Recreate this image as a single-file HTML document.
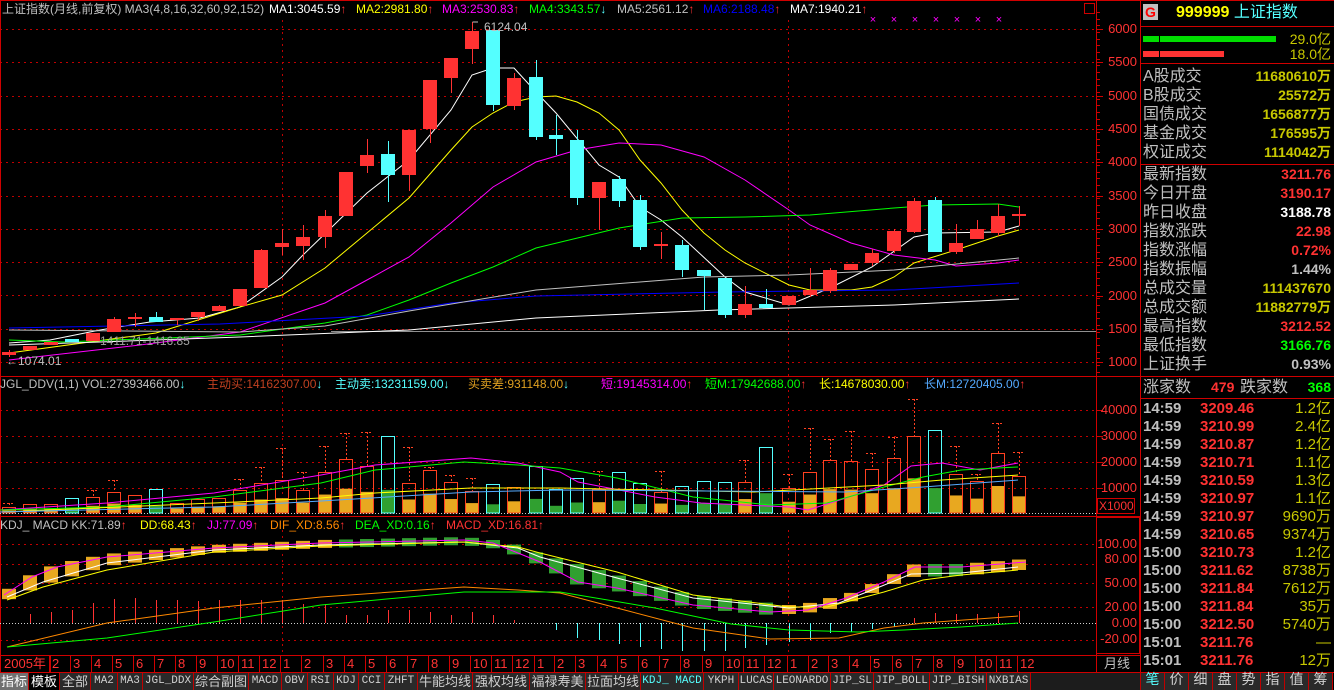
<!DOCTYPE html>
<html><head><meta charset="utf-8">
<style>
*{margin:0;padding:0;box-sizing:border-box}
body{width:1334px;height:690px;background:#000;overflow:hidden;position:relative;font-family:"Liberation Sans","Noto Sans CJK SC",sans-serif}
.t{position:absolute;white-space:nowrap;font-size:12px;line-height:14px}
.rp{position:absolute;white-space:nowrap;font-size:16px;line-height:19px;color:#c0c0c0}
.rv{position:absolute;white-space:nowrap;font-size:14px;line-height:19px;font-weight:bold;right:3px;text-align:right}
.tk{position:absolute;left:1143px;width:188px;height:18px;font-size:15px;line-height:18px;font-weight:bold}
.tab{position:absolute;top:673px;height:17px;border-right:1px solid #c00000;background:#2a2a2a;color:#d0d0d0;font-size:12px;line-height:17px;text-align:center;font-family:"Liberation Mono","Noto Sans CJK SC",monospace}
</style></head><body>
<svg id="s" width="1334" height="690" style="position:absolute;left:0;top:0"></svg>

<div class="t" style="left:2px;top:2px;color:#c0c0c0">上证指数(月线,前复权) MA3(4,8,16,32,60,92,152)</div>
<div class="t" style="left:269px;top:2px;color:#fff">MA1:3045.59<span style="color:#f33">↑</span></div>
<div class="t" style="left:356px;top:2px;color:#ff0">MA2:2981.80<span style="color:#f33">↑</span></div>
<div class="t" style="left:442px;top:2px;color:#f0f">MA3:2530.83<span style="color:#f33">↑</span></div>
<div class="t" style="left:529px;top:2px;color:#0f0">MA4:3343.57<span style="color:#5ff">↓</span></div>
<div class="t" style="left:617px;top:2px;color:#c0c0c0">MA5:2561.12<span style="color:#f33">↑</span></div>
<div class="t" style="left:703px;top:2px;color:#00f">MA6:2188.48<span style="color:#f33">↑</span></div>
<div class="t" style="left:790px;top:2px;color:#fff">MA7:1940.21<span style="color:#f33">↑</span></div>
<div class="t" style="left:484px;top:20px;color:#c0c0c0">6124.04</div>
<div class="t" style="left:6px;top:354px;color:#c0c0c0">←1074.01</div>
<div class="t" style="left:100px;top:334px;color:#a0a0a0">1411.71-1416.85</div>

<div class="t" style="left:0;top:377px;color:#c0c0c0">JGL_DDV(1,1) VOL:27393466.00<span style="color:#5ff">↓</span></div>
<div class="t" style="left:207px;top:377px;color:#c04020">主动买:14162307.00<span style="color:#5ff">↓</span></div>
<div class="t" style="left:335px;top:377px;color:#5ff">主动卖:13231159.00<span style="color:#5ff">↓</span></div>
<div class="t" style="left:468px;top:377px;color:#e0a020">买卖差:931148.00<span style="color:#5ff">↓</span></div>
<div class="t" style="left:601px;top:377px;color:#f0f">短:19145314.00<span style="color:#f33">↑</span></div>
<div class="t" style="left:705px;top:377px;color:#0f0">短M:17942688.00<span style="color:#f33">↑</span></div>
<div class="t" style="left:819px;top:377px;color:#ff0">长:14678030.00<span style="color:#f33">↑</span></div>
<div class="t" style="left:924px;top:377px;color:#5af">长M:12720405.00<span style="color:#f33">↑</span></div>

<div class="t" style="left:0;top:518px;color:#c0c0c0">KDJ_ MACD KK:71.89<span style="color:#f33">↑</span></div>
<div class="t" style="left:140px;top:518px;color:#ff0">DD:68.43<span style="color:#f33">↑</span></div>
<div class="t" style="left:207px;top:518px;color:#f0f">JJ:77.09<span style="color:#f33">↑</span></div>
<div class="t" style="left:270px;top:518px;color:#f80">DIF_XD:8.56<span style="color:#f33">↑</span></div>
<div class="t" style="left:355px;top:518px;color:#0f0">DEA_XD:0.16<span style="color:#f33">↑</span></div>
<div class="t" style="left:446px;top:518px;color:#f33">MACD_XD:16.81<span style="color:#f33">↑</span></div>

<div id="ax"></div>

<!-- right panel -->
<div style="position:absolute;left:1143px;top:4px;width:15px;height:16px;background:#c0c0c0;color:#f00;font-size:14px;line-height:16px;text-align:center;font-weight:bold">G</div>
<div class="t" style="left:1176px;top:3px;font-size:16px;line-height:19px;color:#ff0;font-weight:bold">999999 <span style="color:#5ff;font-weight:normal">上证指数</span></div>
<div style="position:absolute;left:1143px;top:36px;width:133px;height:6px;background:#0d0"></div>
<div style="position:absolute;left:1159px;top:36px;width:1px;height:6px;background:#000"></div>
<div style="position:absolute;left:1143px;top:51px;width:81px;height:6px;background:#f33"></div>
<div style="position:absolute;left:1159px;top:51px;width:1px;height:6px;background:#000"></div>
<div class="rv" style="top:30px;color:#c8c800;font-weight:normal">29.0亿</div>
<div class="rv" style="top:45px;color:#c8c800;font-weight:normal">18.0亿</div>

<div id="rows"></div>

<div class="tab" style="left:0;width:29px;background:#707070;color:#fff;font-family:'Liberation Sans','Noto Sans CJK SC',sans-serif;font-size:13px">指标</div>
<div class="tab" style="left:29px;width:31px;background:#000;color:#fff;font-family:'Liberation Sans','Noto Sans CJK SC',sans-serif;font-size:13px">模板</div>
<div id="tabs"></div>

<script>
const S=document.getElementById('s');let h='';
function L(x1,y1,x2,y2,c,d){h+=`<line x1="${x1}" y1="${y1}" x2="${x2}" y2="${y2}" stroke="${c}" stroke-width="1"${d?` stroke-dasharray="${d}"`:''}/>`}
function R(x,y,w,hh,f,st){h+=`<rect x="${x}" y="${y}" width="${w}" height="${hh}" fill="${f||'none'}"${st?` stroke="${st}" stroke-width="1"`:''}/>`}
function P(pts,c,w){h+=`<polyline points="${pts.map(p=>p.join(',')).join(' ')}" fill="none" stroke="${c}" stroke-width="${w||1}"/>`}
// grid
for(let i=0;i<=10;i++){let y=Math.round(29+i*33.3)+.5;L(0,y,1096,y,'#c00000','2,4')}
for(const x of [282.5,788.5]){L(x,20,x,376,'#c00000','2,4');L(x,390,x,515,'#c00000','2,4');L(x,530,x,655,'#c00000','2,4')}
[410,436,462,488].forEach(y=>L(0,y+.5,1096,y+.5,'#c00000','2,4'));
[544,564,583,607,640].forEach(y=>L(0,y+.5,1096,y+.5,'#c00000','2,4'));
// frame
L(0,0.5,1334,0.5,'#d00000');
[376.5,516.5,655.5,672.5].forEach(y=>L(0,y,1140,y,'#d00000'));
L(1096.5,0,1096.5,690,'#d00000');L(1140.5,0,1140.5,690,'#d00000');L(0.5,0,0.5,672,'#d00000');
R(1084.5,3.5,10,10,null,'#d00000');
// magenta marks
for(let i=0;i<7;i++){let x=873+i*21;h+=`<text x="${x}" y="23" fill="#f0f" font-size="11" font-family="Liberation Sans" text-anchor="middle">×</text>`}
L(331,331.5,1096,331.5,'#909090');
// MAs
P([[9,343],[50,340],[100,330],[150,322],[200,318],[240,307],[282,277],[303,255],[367,193],[409,160],[451,110],[472,75],[493,68],[514,68],[536,92],[556,113],[599,165],[619,177],[640,207],[661,220],[682,237],[725,277],[745,292],[789,305],[830,288],[872,267],[914,237],[935,233],[998,232],[1019,226]],'#fff');
P([[9,353],[156,333],[240,307],[282,295],[325,268],[367,233],[409,198],[451,150],[472,127],[493,113],[514,102],[536,97],[556,96],[577,102],[599,113],[619,130],[640,160],[661,183],[682,210],[704,233],[725,250],[745,263],[789,285],[810,290],[851,290],[872,287],[894,277],[914,263],[956,250],[998,236],[1019,230]],'#ff0');
P([[9,360],[140,345],[240,332],[325,303],[367,280],[409,257],[451,223],[493,187],[536,162],[577,150],[619,143],[661,145],[704,157],[745,180],[789,210],[810,225],[851,243],[894,255],[935,260],[956,266],[998,263],[1019,260]],'#f0f');
P([[9,340],[63,342],[240,335],[325,323],[367,315],[409,300],[451,283],[493,267],[536,248],[619,228],[682,218],[745,217],[810,215],[894,208],[935,205],[998,204],[1019,207]],'#0f0');
P([[9,328],[220,324],[367,316],[451,303],[536,296],[725,292],[894,290],[1019,283]],'#00f');
P([[9,330],[240,332],[325,326],[409,311],[536,290],[704,277],[789,275],[894,270],[1019,258]],'#c0c0c0');
P([[9,345],[100,342],[240,337],[409,330],[536,318],[719,310],[894,305],[1019,299]],'#fff');
// candles
const C=[[9,352,355,'r',350,357],[30,346,350,'r'],[51,342,345,'r'],[72,339,342,'c'],[93,333,341,'r'],[114,319,332,'r',317],[135,317,318,'r',313,327],[156,317,322,'c',312],[177,318,320,'r',0,325],[198,312,317,'r',0,321],[219,306,311,'r',305],[240,289,306,'r'],[261,250,288,'r',249],[282,243,247,'r',229,255],[303,237,246,'r',225,260],[325,216,237,'r',210,248],[346,172,216,'r'],[367,155,166,'r',139,173],[388,154,175,'c',141,202],[409,130,175,'r',0,191],[430,80,129,'r',0,143],[451,58,78,'r',0,93],[472,31,49,'r',22,64],[493,30,105,'c',0,111],[514,78,106,'r',73,110],[536,77,137,'c',60,140],[556,135,139,'c',115,155],[577,140,198,'c',130,205],[599,182,198,'r',0,230],[619,179,201,'c',176,207],[640,200,247,'c',195,250],[661,244,246,'r',232,259],[682,245,270,'c',240,277],[704,270,276,'c',0,310],[725,278,315,'c',0,318],[745,304,315,'r',286,318],[766,304,308,'c',289],[789,296,305,'r'],[810,290,295,'r',268,297],[830,270,291,'r',268,293],[851,264,270,'r'],[872,253,263,'r',249,266],[894,231,251,'r',229,253],[914,201,232,'r',198,233],[935,200,252,'c',197],[956,243,252,'r',224,254],[977,229,239,'r',220],[998,216,233,'r',204,236],[1019,214,215,'r',206,226]];
C.forEach(c=>{let [x,t,b,k,hi,lo]=c;let col=k=='r'?'#ff3232':'#54ffff';hi=hi||t;lo=lo||b;
 L(x+.5,hi,x+.5,lo,col);R(x-7,t,14,Math.max(b-t,2),col);});
L(472.5,22,478,22,'#c0c0c0');
// volume
const V=[[507,503],[504],[504],[498],[497,490],[492,480],[495],[489],[503],[499],[498],[490,479],[483,467],[480,448],[490,472],[472,446],[459,433],[466,432],[436],[483,447],[470,467],[482,475],[491,478],[484],[487],[466],[489],[478],[489,471],[472],[483],[492,471],[486],[481],[482],[482,460],[447],[488,474],[472,428],[460,439],[461,431],[469,453],[458,437],[436,399],[430],[474,446],[481,474],[453,423],[476,452]];
V.forEach((v,i)=>{let x=C[i][0],c=C[i][3]=='r';let t=v[0],b=513;
 if(v[1]&&v[1]<t)L(x+.5,v[1],x+.5,t,'#ff4020','2,2'),L(x-6,v[1]+.5,x+6,v[1]+.5,'#ff4020','2,2');
 let f=b-(b-t)*(c?0.45:0.3);R(x-6,f,12,b-f,c?'#e8a820':'#30a030');
 R(x-6.5,t+.5,13,b-t-.5,null,c?'#ff4020':'#54ffff');});
L(0,513.5,1096,513.5,'#d0d0d0','1,2');
P([[0,510],[107,503],[214,493],[321,475],[375,465],[471,458],[518,463],[560,472],[578,482],[655,497],[701,503],[789,507],[808,510],[846,498],[884,485],[911,466],[942,463],[980,470],[1018,463]],'#f0f');
P([[0,510],[107,507],[214,497],[321,483],[375,470],[464,462],[518,465],[560,468],[617,478],[693,497],[770,505],[827,503],[884,487],[923,477],[961,470],[1018,467]],'#0f0');
P([[0,512],[214,503],[321,498],[375,493],[471,488],[560,488],[754,492],[884,485],[942,480],[1018,475]],'#ff0');
P([[0,512],[214,507],[321,501],[471,492],[560,490],[846,492],[923,487],[1018,480]],'#5af');
// KDJ
const J=[[4,595],[32,577],[57,567],[107,557],[214,548],[321,543],[464,540],[493,543],[518,553],[540,562],[578,582],[617,588],[693,605],[770,612],[808,610],[846,598],[884,582],[915,567],[961,567],[1026,562]];
const K=[[7,597],[43,582],[107,563],[214,550],[321,545],[464,542],[518,548],[540,557],[617,578],[693,598],[789,608],[839,603],[877,588],[911,574],[961,573],[1018,567]];
const D=[[7,600],[43,587],[107,570],[214,552],[321,546],[464,542],[518,547],[540,553],[617,572],[693,595],[789,607],[827,607],[884,592],[923,580],[961,575],[1018,570]];
function I(a,x){if(x<=a[0][0])return a[0][1];for(let i=1;i<a.length;i++)if(x<=a[i][0]){let p=a[i-1],q=a[i];return p[1]+(q[1]-p[1])*(x-p[0])/(q[0]-p[0])}return a[a.length-1][1]}
C.forEach((c,i)=>{let x=c[0],j=I(J,x),k=I(K,x),pj=I(J,x-21);let t=Math.min(j,k)-3,b=Math.max(j,k)+3;if(b-t<8){t-=2;b+=2}
 R(x-7,t,14,b-t,(j<pj-0.5||i==0)?'#e8a820':'#30a030');});
P(K,'#fff');P(D,'#ff0');P(J,'#f0f');
L(0,623.5,1096,623.5,'#d0d0d0','1,2');
const M=[0,614,612,610,603,599,598,600,600,601,600,600,600,600,604,604,615,615,610,610,612,615,612,615,620,623,630,638,640,644,647,649,651,651,651,648,645,642,640,633,632,629,627,618,613,614,614,613,611];
M.forEach((m,i)=>{if(!m||m==623)return;let x=C[i][0]+.5;L(x,623,x,m,m<623?'#ff3232':'#54ffff')});
P([[7,647],[107,623],[214,608],[321,597],[464,587],[518,590],[560,593],[617,608],[693,628],[770,639],[839,638],[884,628],[923,623],[1018,616]],'#f80');
P([[7,647],[107,638],[214,622],[321,605],[464,592],[560,592],[655,608],[731,624],[789,630],[858,632],[904,630],[961,627],[1018,623]],'#0f0');
// date axis
let ax='';
ax+=`<div class="t" style="left:4px;top:657px;color:#f33;font-size:13px">2005年</div>`;
for(let k=2;k<=48;k++){let x=C[k][0];let m=((k-1)%12)+1;L(x-1.5,656,x-1.5,672,'#d00000');ax+=`<div class="t" style="left:${x+1}px;top:657px;color:#f33;font-size:13px">${m}</div>`;}
L(50.5,656,50.5,672,'#d00000');
// axis labels
[[6000,29],[5500,62],[5000,96],[4500,129],[4000,162],[3500,196],[3000,229],[2500,262],[2000,296],[1500,329],[1000,362]].forEach(a=>{ax+=`<div class="t" style="right:197px;top:${a[1]-7}px;color:#f33;font-size:13px">${a[0]}</div>`;L(1097,a[1]+.5,1103,a[1]+.5,'#d00000')});
for(let y=12;y<372;y+=6.66)L(1097,Math.round(y)+.5,1100,Math.round(y)+.5,'#d00000');
[[40000,410],[30000,436],[20000,462],[10000,488]].forEach(a=>{ax+=`<div class="t" style="right:197px;top:${a[1]-7}px;color:#f33;font-size:13px">${a[0]}</div>`;L(1097,a[1]+.5,1103,a[1]+.5,'#d00000')});
R(1097.5,498.5,37,15,null,'#d00000');ax+=`<div class="t" style="left:1099px;top:499px;color:#f33;font-size:12px">X1000</div>`;
R(1096.5,517.5,43,136,null,'#d00000');
[['100.00',544],['80.00',559],['50.00',583],['20.00',607],['0.00',623],['-20.00',639]].forEach(a=>{ax+=`<div class="t" style="right:197px;top:${a[1]-7}px;color:#f33;font-size:13px">${a[0]}</div>`});
ax+=`<div class="t" style="left:1104px;top:656px;color:#c0c0c0;font-size:13px;line-height:16px">月线</div>`;
// right panel lines
[63.5,164.5,376.5,398.5,672.5].forEach(y=>L(1140,y,1334,y,'#d00000'));
L(1140,26.5,1334,26.5,'#d00000');
document.getElementById('ax').innerHTML=ax;
// right rows
let r='';
const A=[['A股成交','11680610万','#c8c800'],['B股成交','25572万','#c8c800'],['国债成交','1656877万','#c8c800'],['基金成交','176595万','#c8c800'],['权证成交','1114042万','#c8c800']];
A.forEach((a,i)=>{let y=67+i*19;r+=`<div class="rp" style="left:1143px;top:${y}px">${a[0]}</div><div class="rv" style="top:${y}px;color:${a[2]}">${a[1]}</div>`});
const B=[['最新指数','3211.76','#ff3232'],['今日开盘','3190.17','#ff3232'],['昨日收盘','3188.78','#fff'],['指数涨跌','22.98','#ff3232'],['指数涨幅','0.72%','#ff3232'],['指数振幅','1.44%','#c0c0c0'],['总成交量','111437670','#c8c800'],['总成交额','11882779万','#c8c800'],['最高指数','3212.52','#ff3232'],['最低指数','3166.76','#00ff00'],['上证换手','0.93%','#c0c0c0']];
B.forEach((a,i)=>{let y=165+i*19;r+=`<div class="rp" style="left:1143px;top:${y}px">${a[0]}</div><div class="rv" style="top:${y}px;color:${a[2]}">${a[1]}</div>`});
r+=`<div class="rp" style="left:1143px;top:378px">涨家数</div><div class="rv" style="top:378px;right:auto;left:1211px;color:#ff3232">479</div><div class="rp" style="left:1240px;top:378px">跌家数</div><div class="rv" style="top:378px;color:#00ff00">368</div>`;
const T=[['14:59','3209.46','1.2亿'],['14:59','3210.99','2.4亿'],['14:59','3210.87','1.2亿'],['14:59','3210.71','1.1亿'],['14:59','3210.59','1.3亿'],['14:59','3210.97','1.1亿'],['14:59','3210.97','9690万'],['14:59','3210.65','9374万'],['15:00','3210.73','1.2亿'],['15:00','3211.62','8738万'],['15:00','3211.84','7612万'],['15:00','3211.84','35万'],['15:00','3212.50','5740万'],['15:01','3211.76','—'],['15:01','3211.76','12万']];
T.forEach((a,i)=>{let y=400+i*18;r+=`<div class="tk" style="top:${y}px"><span style="color:#c0c0c0">${a[0]}</span><span style="position:absolute;left:57px;color:#ff3232">${a[1]}</span><span style="position:absolute;right:0;color:#c8c800;font-weight:normal">${a[2]}</span></div>`});
const W=['笔','价','细','盘','势','指','值','筹'];
W.forEach((w,i)=>{r+=`<div class="tab" style="left:${1141+i*24}px;width:24px;font-size:14px;${i==0?'color:#5ff':''}">${w}</div>`});
document.getElementById('rows').innerHTML=r;
// tabs
const TB=[['全部',60,31],['MA2',91,27],['MA3',118,25],['JGL_DDX',143,51],['综合副图',194,55],['MACD',249,33],['OBV',282,26],['RSI',308,26],['KDJ',334,25],['CCI',359,26],['ZHFT',385,33],['牛能均线',418,55],['强权均线',473,57],['福禄寿美',530,56],['拉面均线',586,55],['KDJ_ MACD',641,63],['YKPH',704,35],['LUCAS',739,35],['LEONARDO',774,57],['JIP_SL',831,43],['JIP_BOLL',874,56],['JIP_BISH',930,57],['NXBIAS',987,44]];
let tb='';TB.forEach(t=>{tb+=`<div class="tab" style="left:${t[1]}px;width:${t[2]}px;${t[0]=='KDJ_ MACD'?'color:#5ff;':''}${/[^\x00-\x7f]/.test(t[0])?"font-family:'Liberation Sans','Noto Sans CJK SC',sans-serif;font-size:13px;":'font-size:11px;'}">${t[0]}</div>`});
tb+=`<div class="tab" style="left:1031px;width:110px;background:#1c1c1c"></div>`;
document.getElementById('tabs').innerHTML=tb;
S.innerHTML=h;
</script>
</body></html>
